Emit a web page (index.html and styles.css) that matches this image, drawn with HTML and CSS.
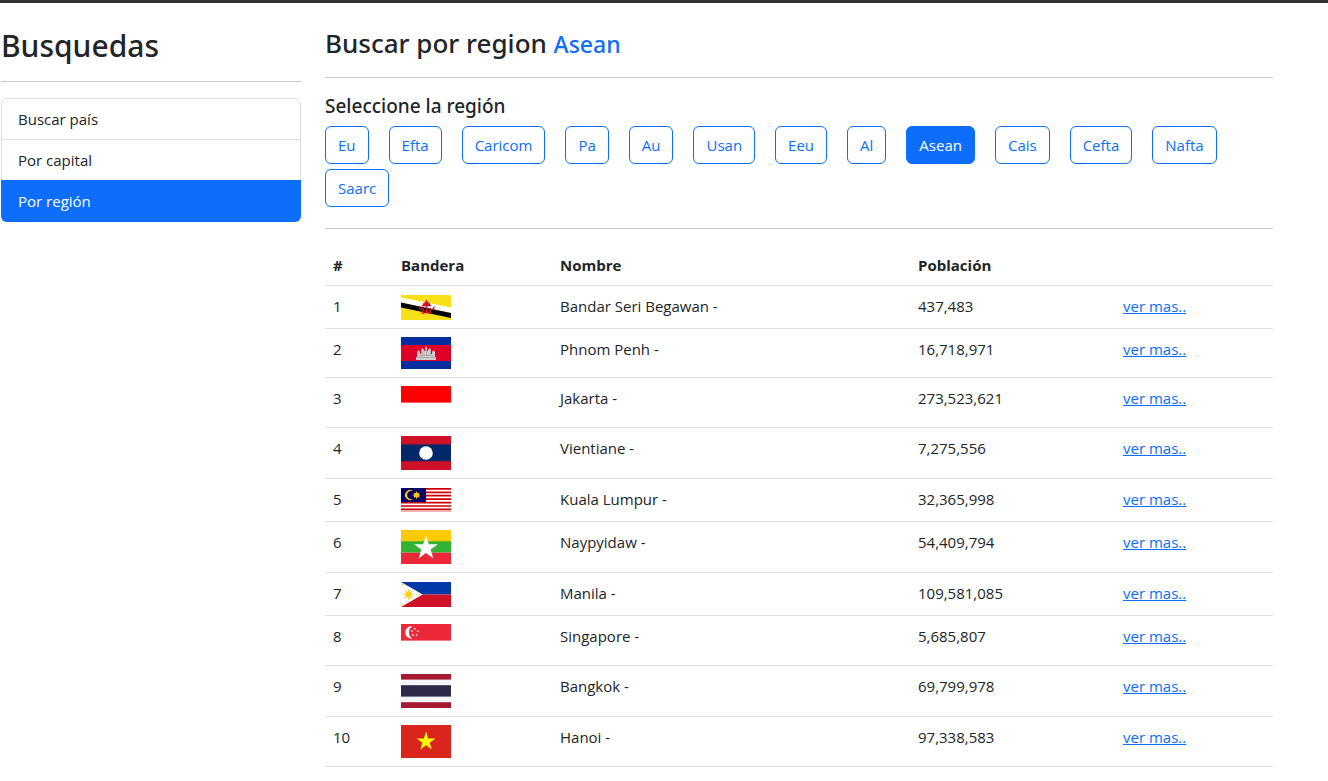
FILE: index.html
```html
<!DOCTYPE html>
<html lang="es">
<head>
    <meta charset="UTF-8">
    <meta name="viewport" content="width=device-width, initial-scale=1.0">
    <title>Paises App</title>
    <link rel="stylesheet" href="styles.css">
</head>
<body>
    <div class="container">
        <aside class="sidebar">
            <h1>Busquedas</h1>
            <hr>
            <nav class="list-group">
                <a href="#pais" class="list-group-item">Buscar país</a>
                <a href="#capital" class="list-group-item">Por capital</a>
                <a href="#region" class="list-group-item active">Por región</a>
            </nav>
        </aside>

        <main class="content">
            <h2>Buscar por region <small>Asean</small></h2>
            <hr>

            <h3>Seleccione la región</h3>
            <div class="regions">
                <button type="button" class="btn">Eu</button>
                <button type="button" class="btn">Efta</button>
                <button type="button" class="btn">Caricom</button>
                <button type="button" class="btn">Pa</button>
                <button type="button" class="btn">Au</button>
                <button type="button" class="btn">Usan</button>
                <button type="button" class="btn">Eeu</button>
                <button type="button" class="btn">Al</button>
                <button type="button" class="btn active">Asean</button>
                <button type="button" class="btn">Cais</button>
                <button type="button" class="btn">Cefta</button>
                <button type="button" class="btn">Nafta</button>
                <button type="button" class="btn">Saarc</button>
            </div>
            <hr>

            <table class="table">
                <colgroup>
                    <col class="col-num">
                    <col class="col-flag">
                    <col>
                    <col class="col-population">
                    <col class="col-link">
                </colgroup>
                <thead>
                    <tr>
                        <th>#</th>
                        <th>Bandera</th>
                        <th>Nombre</th>
                        <th>Población</th>
                        <th></th>
                    </tr>
                </thead>
                <tbody>
                    <tr>
                        <td>1</td>
                        <td>
                            <svg class="flag flag-wide" viewBox="0 0 50 25">
                                <rect width="50" height="25" fill="#f7e017"/>
                                <path d="M0 2.5 50 12.5V18L0 8z" fill="#fff"/>
                                <path d="M0 7.5 50 18V23L0 12.5z" fill="#000"/>
                                <g fill="none" stroke="#cf1126">
                                    <path d="M25.500 5V17M23.500 7.500h4M22 9h7M21 10.500h9" stroke-width="1.300"/>
                                    <path d="M19 12.500c.5 5 12.500 5 13.500 0M21.500 13v4M29.500 13v4M17.500 11.500l1.500 3M33.500 11.500l-1.500 3"/>
                                    <path d="M20.500 18.500q5-2 10 0" stroke-width="1.500"/>
                                </g>
                            </svg>
                        </td>
                        <td>Bandar Seri Begawan -</td>
                        <td>437,483</td>
                        <td><a href="#brunei">ver mas..</a></td>
                    </tr>
                    <tr>
                        <td>2</td>
                        <td>
                            <svg class="flag flag-32" viewBox="0 0 50 32">
                                <rect width="50" height="32" fill="#032ea1"/>
                                <rect y="8" width="50" height="16" fill="#e00025"/>
                                <path d="M15 23v-3h1v-5l1.500-2 1.500 2v2h1v-4l1.500-2 1.500 2v1h1v-3l1-2 1 2v3h1v-1l1.500-2 1.500 2v4h1v-2l1.500-2 1.500 2v5h1v3z" fill="#d0cbcc"/>
                                <path d="M16 20.500h18M18 18.500h14M21.500 14v4M25.500 12v6M29.500 14v4" stroke="#9b9394" stroke-width=".6"/>
                            </svg>
                        </td>
                        <td>Phnom Penh -</td>
                        <td>16,718,971</td>
                        <td><a href="#cambodia">ver mas..</a></td>
                    </tr>
                    <tr>
                        <td>3</td>
                        <td>
                            <svg class="flag flag-33" viewBox="0 0 50 33">
                                <rect width="50" height="33" fill="#fff"/>
                                <rect width="50" height="16.600" fill="#f00"/>
                            </svg>
                        </td>
                        <td>Jakarta -</td>
                        <td>273,523,621</td>
                        <td><a href="#indonesia">ver mas..</a></td>
                    </tr>
                    <tr>
                        <td>4</td>
                        <td>
                            <svg class="flag flag-34" viewBox="0 0 50 34">
                                <rect width="50" height="34" fill="#ce1126"/>
                                <rect y="8.400" width="50" height="16.800" fill="#002868"/>
                                <circle cx="25" cy="17" r="6.800" fill="#fff"/>
                            </svg>
                        </td>
                        <td>Vientiane -</td>
                        <td>7,275,556</td>
                        <td><a href="#laos">ver mas..</a></td>
                    </tr>
                    <tr>
                        <td>5</td>
                        <td>
                            <svg class="flag flag-wide" viewBox="0 0 50 25">
                                <rect width="50" height="24" fill="#fff"/>
                                <path d="M0 .85h50M0 4.280h50M0 7.710h50M0 11.140h50M0 14.570h50M0 18h50M0 21.430h50" stroke="#c00" stroke-width="1.710"/>
                                <rect y="22.800" width="50" height="1.200" fill="#c00" opacity=".3"/>
                                <rect width="25" height="14" fill="#006"/>
                                <path d="M12 3a5 5 0 1 0 0 8a4.300 4.300 0 1 1 0-8z" fill="#fc0"/>
                                <path d="M15.500 3l.8 2.200 2.200-.8-.8 2 2.300.6-2.300.8.8 2-2.200-.8-.8 2.200-.8-2.200-2.200.8.8-2-2.300-.8 2.300-.6-.8-2 2.200.8z" fill="#fc0"/>
                            </svg>
                        </td>
                        <td>Kuala Lumpur -</td>
                        <td>32,365,998</td>
                        <td><a href="#malaysia">ver mas..</a></td>
                    </tr>
                    <tr>
                        <td>6</td>
                        <td>
                            <svg class="flag flag-34" viewBox="0 0 50 34">
                                <rect width="50" height="12" fill="#fecb00"/>
                                <rect y="11.300" width="50" height="11.400" fill="#34b233"/>
                                <rect y="22.700" width="50" height="11.300" fill="#ea2839"/>
                                <path d="M25 5.500l2.850 8.700H37l-7.400 5.400 2.800 8.800-7.400-5.400-7.400 5.400 2.800-8.800L13 14.200h9.150z" fill="#fff"/>
                            </svg>
                        </td>
                        <td>Naypyidaw -</td>
                        <td>54,409,794</td>
                        <td><a href="#myanmar">ver mas..</a></td>
                    </tr>
                    <tr>
                        <td>7</td>
                        <td>
                            <svg class="flag flag-wide" viewBox="0 0 50 25">
                                <rect width="50" height="12.500" fill="#0038a8"/>
                                <rect y="12.500" width="50" height="12.500" fill="#ce1126"/>
                                <path d="M0 0 21.700 12.500 0 25z" fill="#fff"/>
                                <g fill="#fcd116" stroke="#fcd116">
                                    <circle cx="7.500" cy="12.500" r="2.700"/>
                                    <path d="M7.500 7.500v10M2.500 12.500h10M4 9l7 7M11 9l-7 7" stroke-width="1.100"/>
                                    <path d="M1 2.500h1.200M1 22.500h1.200M17.500 12.500h1.500" stroke-width="1.500"/>
                                </g>
                            </svg>
                        </td>
                        <td>Manila -</td>
                        <td>109,581,085</td>
                        <td><a href="#philippines">ver mas..</a></td>
                    </tr>
                    <tr>
                        <td>8</td>
                        <td>
                            <svg class="flag flag-33" viewBox="0 0 50 33">
                                <rect width="50" height="33" fill="#fff"/>
                                <rect width="50" height="16.600" fill="#ed2939"/>
                                <path d="M11.500 2.300a6.200 6.200 0 1 0 0 12.200a7 7 0 0 1 0-12.200z" fill="#fff"/>
                                <path d="M13 4h1.500v1.500H13zM10 6.500h1.500V8H10zM16 6.500h1.500V8H16zM11 10.300h1.500v1.500H11zM14.800 10.300h1.500v1.500h-1.500z" fill="#fff"/>
                            </svg>
                        </td>
                        <td>Singapore -</td>
                        <td>5,685,807</td>
                        <td><a href="#singapore">ver mas..</a></td>
                    </tr>
                    <tr>
                        <td>9</td>
                        <td>
                            <svg class="flag flag-34" viewBox="0 0 50 34">
                                <rect width="50" height="34" fill="#a51931"/>
                                <rect y="5.600" width="50" height="22.600" fill="#f4f5f8"/>
                                <rect y="11.200" width="50" height="11.400" fill="#2d2a4a"/>
                            </svg>
                        </td>
                        <td>Bangkok -</td>
                        <td>69,799,978</td>
                        <td><a href="#thailand">ver mas..</a></td>
                    </tr>
                    <tr>
                        <td>10</td>
                        <td>
                            <svg class="flag flag-33" viewBox="0 0 50 33">
                                <rect width="50" height="33" fill="#da251d"/>
                                <path d="M25 6.500l2.200 6.900h7.300l-5.900 4.300 2.200 6.900-5.800-4.300-5.800 4.300 2.200-6.900-5.900-4.300h7.300z" fill="#ff0"/>
                            </svg>
                        </td>
                        <td>Hanoi -</td>
                        <td>97,338,583</td>
                        <td><a href="#vietnam">ver mas..</a></td>
                    </tr>
                </tbody>
            </table>
        </main>
    </div>
</body>
</html>
```
FILE: styles.css
```css
* {
    box-sizing: border-box;
}
body {
    margin: 0;
    border-top: 3px solid #333;
    font-family: "Segoe UI", "Open Sans", "Noto Sans", sans-serif;
    font-size: 15px;
    line-height: 24px;
    color: #212529;
    background-color: #fff;
}
h1, h2, h3 {
    margin: 0;
    font-family: "Segoe UI", "Noto Sans", "Open Sans", sans-serif;
    font-weight: 500;
}
h1 {
    font-size: 30px;
    line-height: 38px;
}
h2 {
    font-size: 26px;
    line-height: 33px;
}
h2 small {
    font-size: 23px;
    color: #0d6efd;
}
h3 {
    font-size: 19px;
    line-height: 24px;
}
hr {
    margin: 16px 0;
    border: 0;
    border-top: 1px solid #c8c9ca;
}
a {
    color: #0d6efd;
}
.container {
    display: grid;
    grid-template-columns: repeat(12, 1fr);
    column-gap: 24px;
    padding: 24px 55px 0 1px;
}
.sidebar {
    grid-column: span 3;
}
.content {
    grid-column: span 9;
}
.list-group {
    display: flex;
    flex-direction: column;
    border: 1px solid #dfdfdf;
    border-radius: 6px;
}
.list-group-item {
    padding: 8px 16px;
    border-bottom: 1px solid #dfdfdf;
    color: #212529;
    text-decoration: none;
}
.list-group-item.active {
    margin: -1px;
    padding: 9px 17px;
    border: 0;
    border-radius: 0 0 6px 6px;
    background-color: #0d6efd;
    color: #fff;
}
.regions {
    display: flex;
    flex-wrap: wrap;
    gap: 5px 20px;
    margin: 8px 0 21px;
}
.btn {
    padding: 6px 12px;
    border: 1px solid #0d6efd;
    border-radius: 6px;
    background-color: transparent;
    color: #0d6efd;
    font: inherit;
    cursor: pointer;
}
.btn:hover,
.btn.active {
    background-color: #0d6efd;
    color: #fff;
}
.table {
    width: 100%;
    table-layout: fixed;
    border-collapse: separate;
    border-spacing: 0;
}
.table th,
.table td {
    padding: 8px;
    border-bottom: 1px solid #dee2e6;
    text-align: left;
    vertical-align: top;
}
.col-num {
    width: 68px;
}
.col-flag {
    width: 159px;
}
.col-population {
    width: 205px;
}
.col-link {
    width: 158px;
}
.flag {
    display: block;
    width: 50px;
}
.flag-wide {
    height: 25px;
    margin-top: 1px;
}
.flag-32 {
    height: 32px;
}
.flag-33 {
    height: 33px;
}
.flag-34 {
    height: 34px;
}
```
